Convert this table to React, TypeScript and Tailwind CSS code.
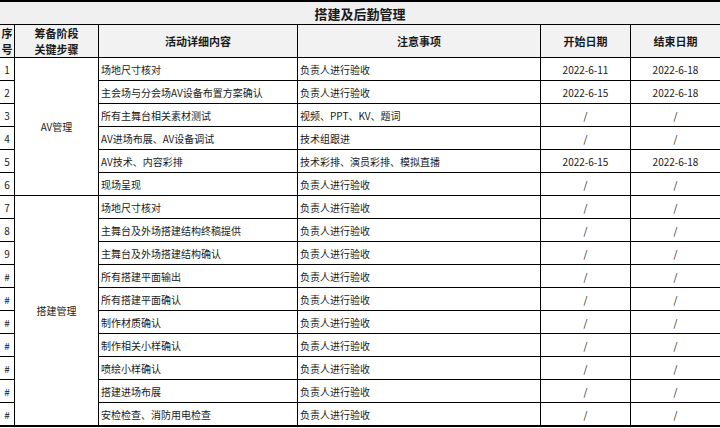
import React from "react";

type Row = { n: string; content: string; note: string; start: string; end: string };

const rows: Row[] = [
  { n: "1", content: "场地尺寸核对", note: "负责人进行验收", start: "2022-6-11", end: "2022-6-18" },
  { n: "2", content: "主会场与分会场AV设备布置方案确认", note: "负责人进行验收", start: "2022-6-15", end: "2022-6-18" },
  { n: "3", content: "所有主舞台相关素材测试", note: "视频、PPT、KV、题词", start: "/", end: "/" },
  { n: "4", content: "AV进场布展、AV设备调试", note: "技术组跟进", start: "/", end: "/" },
  { n: "5", content: "AV技术、内容彩排", note: "技术彩排、演员彩排、模拟直播", start: "2022-6-15", end: "2022-6-18" },
  { n: "6", content: "现场呈现", note: "负责人进行验收", start: "/", end: "/" },
  { n: "7", content: "场地尺寸核对", note: "负责人进行验收", start: "/", end: "/" },
  { n: "8", content: "主舞台及外场搭建结构终稿提供", note: "负责人进行验收", start: "/", end: "/" },
  { n: "9", content: "主舞台及外场搭建结构确认", note: "负责人进行验收", start: "/", end: "/" },
  { n: "#", content: "所有搭建平面输出", note: "负责人进行验收", start: "/", end: "/" },
  { n: "#", content: "所有搭建平面确认", note: "负责人进行验收", start: "/", end: "/" },
  { n: "#", content: "制作材质确认", note: "负责人进行验收", start: "/", end: "/" },
  { n: "#", content: "制作相关小样确认", note: "负责人进行验收", start: "/", end: "/" },
  { n: "#", content: "喷绘小样确认", note: "负责人进行验收", start: "/", end: "/" },
  { n: "#", content: "搭建进场布展", note: "负责人进行验收", start: "/", end: "/" },
  { n: "#", content: "安检检查、消防用电检查", note: "负责人进行验收", start: "/", end: "/" },
];

const font = { fontFamily: '"Noto Sans CJK SC", "Noto Sans", sans-serif' };

export default function App() {
  return (
    <div
      className="w-[720px] h-[428px] overflow-hidden bg-white text-[#1a1a1a]"
      style={font}
    >
      <div className="h-[24px] border-t-2 border-black bg-[#f0f0f0] flex items-center justify-center">
        <span className="text-[13px] font-bold leading-none">搭建及后勤管理</span>
      </div>
      <div className="grid grid-cols-[14px_83px_198px_242px_89px_89px] grid-rows-[32px_repeat(16,22px)] gap-px bg-black pt-px pb-[2px]">
        <div className="bg-[#f2f2f2] flex items-center justify-center text-center text-[11px] font-bold leading-[16px] break-all">
          序号
        </div>
        <div className="bg-[#f2f2f2] flex items-center justify-center text-center text-[11px] font-bold leading-[16px]">
          筹备阶段
          <br />
          关键步骤
        </div>
        <div className="bg-[#f2f2f2] flex items-center justify-center text-[11px] font-bold">活动详细内容</div>
        <div className="bg-[#f2f2f2] flex items-center justify-center text-[11px] font-bold">注意事项</div>
        <div className="bg-[#f2f2f2] flex items-center justify-center text-[11px] font-bold">开始日期</div>
        <div className="bg-[#f2f2f2] flex items-center justify-center text-[11px] font-bold">结束日期</div>
        {rows.map((r, i) => (
          <React.Fragment key={i}>
            <div className="bg-white flex items-center justify-center text-[10px]">{r.n}</div>
            {i === 0 && (
              <div className="row-span-6 bg-white flex items-center justify-center text-[10px]">AV管理</div>
            )}
            {i === 6 && (
              <div className="row-span-10 bg-white flex items-center justify-center text-[10px]">搭建管理</div>
            )}
            <div className="bg-white flex items-center pl-[2px] text-[10px] whitespace-nowrap">{r.content}</div>
            <div className="bg-white flex items-center pl-[2px] text-[10px] whitespace-nowrap">{r.note}</div>
            <div className="bg-white flex items-center justify-center text-[10px]">{r.start}</div>
            <div className="bg-white flex items-center justify-center text-[10px]">{r.end}</div>
          </React.Fragment>
        ))}
      </div>
    </div>
  );
}
